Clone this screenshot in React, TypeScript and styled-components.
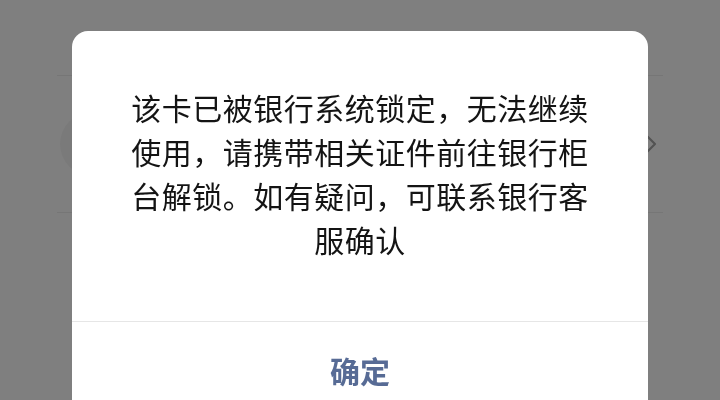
import React from "react";
import styled, { createGlobalStyle } from "styled-components";

const GlobalStyle = createGlobalStyle`
  html, body {
    margin: 0;
    padding: 0;
    background: #ffffff;
    font-family: "Noto Sans CJK SC", "Noto Sans", sans-serif;
  }
  * { box-sizing: border-box; }
`;

/* The card page that sits under the modal */
const Page = styled.div`
  width: 720px;
  height: 400px;
  padding-top: 75px;
  background: #ffffff;
  overflow: hidden;
`;

const List = styled.div`
  margin: 0 57px;
  border-top: 1px solid #ececec;
`;

const Row = styled.div`
  height: 137px;
  display: flex;
  align-items: center;
  justify-content: space-between;
  padding: 0 5px 0 3px;
  border-bottom: 1px solid #ececec;
`;

const Logo = styled.div`
  width: 64px;
  height: 64px;
  border-radius: 50%;
  background: #f5f5f5;
`;

const Chevron = styled.svg`
  width: 14px;
  height: 22px;
  color: #a6a6a6;
`;

/* Modal layer */
const Mask = styled.div`
  position: fixed;
  inset: 0;
  background: rgba(0, 0, 0, 0.5);
  display: flex;
  justify-content: center;
  align-items: flex-start;
  padding-top: 31px;
`;

const Dialog = styled.div`
  width: 576px;
  background: #ffffff;
  border-radius: 16px;
  overflow: hidden;
`;

const Body = styled.div`
  padding: 54px 50px 60px;
  text-align: center;
  font-size: 30px;
  line-height: 44px;
  letter-spacing: 0.5px;
  color: #141414;
`;

const Footer = styled.div`
  border-top: 1px solid #e6e6e6;
  display: flex;
`;

const Action = styled.button`
  flex: 1;
  height: 104px;
  border: 0;
  background: transparent;
  font-family: "Noto Sans CJK SC", "Noto Sans", sans-serif;
  font-size: 30px;
  font-weight: 700;
  color: #576b95;
  padding: 0 0 8px;
  cursor: pointer;
`;

export default function App() {
  return (
    <>
      <GlobalStyle />
      <Page>
        <List>
          <Row>
            <Logo />
            <Chevron viewBox="0 0 14 22" fill="none">
              <path d="M2 2l9 9-9 9" stroke="currentColor" strokeWidth="2.2" strokeLinecap="round" strokeLinejoin="round" />
            </Chevron>
          </Row>
        </List>
      </Page>
      <Mask>
        <Dialog role="dialog">
          <Body>该卡已被银行系统锁定，无法继续使用，请携带相关证件前往银行柜台解锁。如有疑问，可联系银行客服确认</Body>
          <Footer>
            <Action>确定</Action>
          </Footer>
        </Dialog>
      </Mask>
    </>
  );
}
